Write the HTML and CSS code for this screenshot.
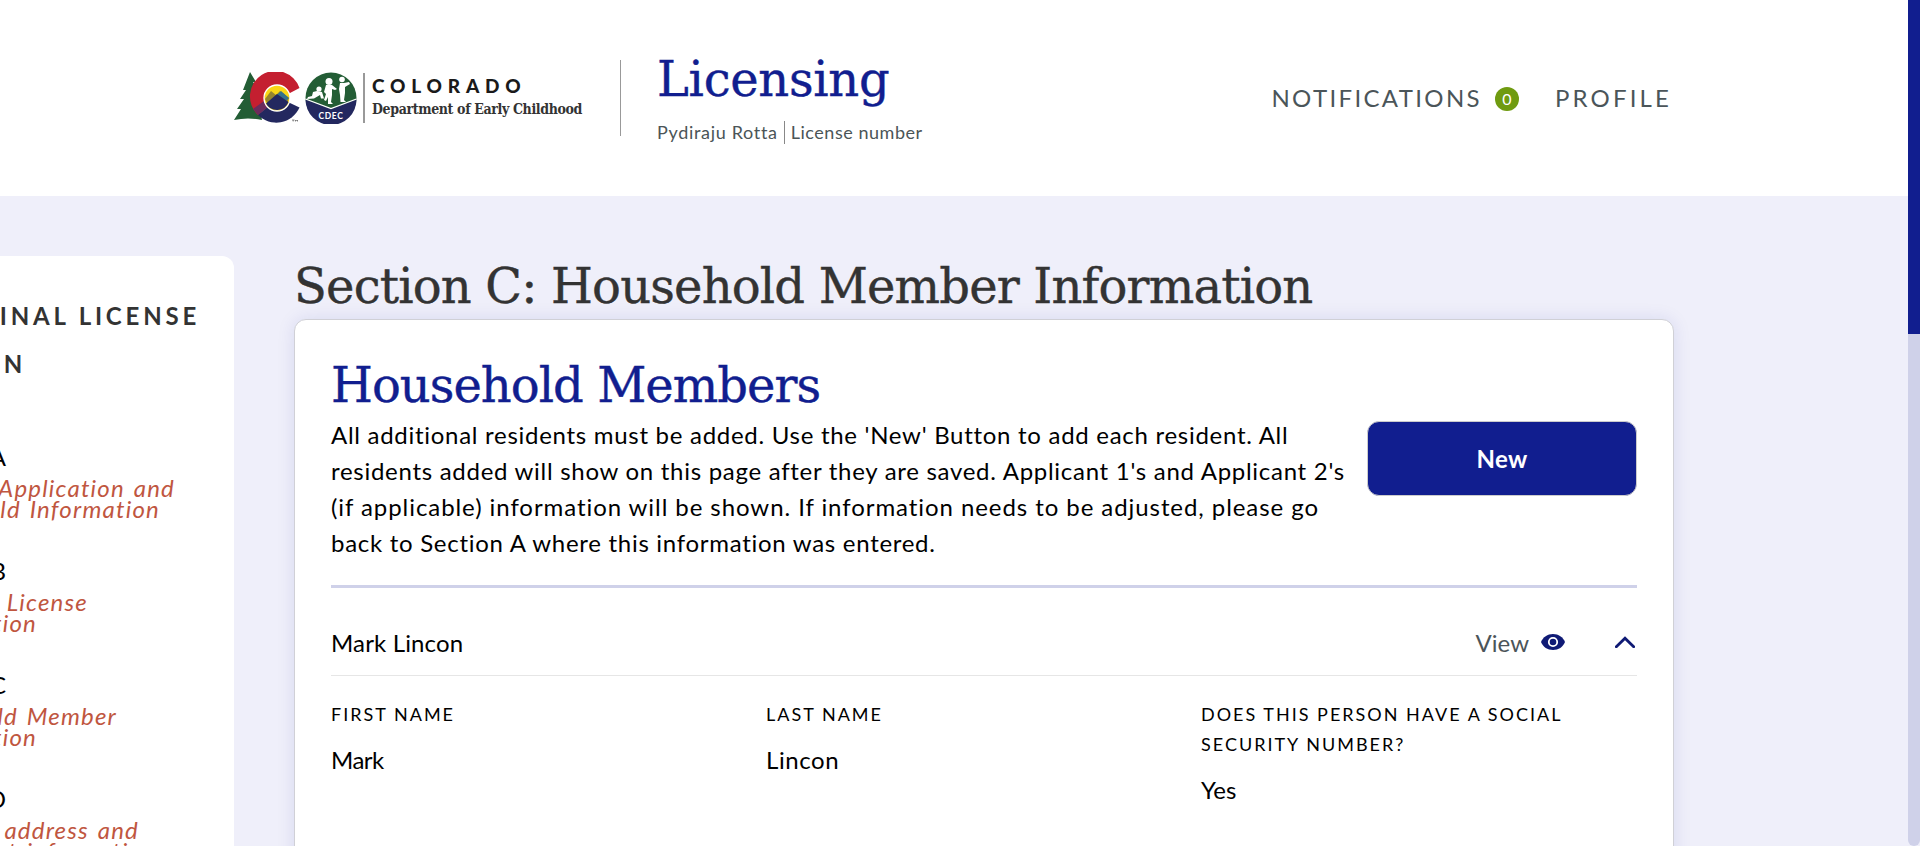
FILE: index.html
```
<!DOCTYPE html>
<html lang="en">
<head>
<meta charset="utf-8">
<title>Licensing</title>
<link rel="stylesheet" href="styles.css">
</head>
<body>
<div class="page">
<header class="header">
  <div class="brand">
    <svg class="logo" width="130" height="52" viewBox="0 0 130 52">
      <path d="M16 0 22 10 19 10 25 18 22 18 28 48Q14 45 0 48L7 37 3 37 10 27 6 27 12 18 9 18Z" fill="#235d35"/>
      <path d="M65.500 16A25.500 25.500 0 1 0 24 43L43 26 56 21Z" fill="#c41f30"/>
      <path d="M24 43A25.500 25.500 0 0 0 65.500 35.500L56 31 43 26Z" fill="#23285f"/>
      <path d="M19 37 30 29 34 35 24 43Z" fill="#6b2b5d"/>
      <circle cx="43" cy="26" r="13" fill="#f9d616" stroke="#fff" stroke-width="1.300"/>
      <path d="M31 27 37 19 42 23 46 19 55 26 53 32 43 34 33 31Z" fill="#95852e"/>
      <path d="M43 23 47 19 55 26 50 31 43 28Z" fill="#35728b"/>
      <path d="M32 31.500 43 22 54.500 30A12.400 12.400 0 0 1 32 31.500Z" fill="#23285f"/>
      <path d="M58 48h2.500M59.200 48v1.500M61.500 49.500v-1.500l1 1 1-1v1.500" stroke="#444" stroke-width=".6" fill="none"/>
      <circle cx="97" cy="26" r="25.500" fill="#235d35"/>
      <path d="M71.500 27.500 97 37 122.500 27.500A25.500 25.500 0 0 1 71.500 27.500Z" fill="#23285f"/>
      <path d="M71.500 27 97 36.500 122.500 27" stroke="#fff" stroke-width="1.300" fill="none"/>
      <g fill="#fff">
        <circle cx="85" cy="17" r="2.600"/><path d="M83 19 88 20 90 26.500 87 26.500 86 23 80 26.500 73 27 74 25 78 24 79 20Z"/>
        <circle cx="95" cy="9.500" r="3.500"/><path d="M92 13 98 13 103 17 101 18 98 17 98 23 97 30 99 32 94 32 94 25 92 29 90 28 92 22 90 20Z"/>
        <circle cx="108" cy="7.500" r="2.800"/><path d="M106 11 110 11 115 10 116 12 111 15 111 21 110 28 112 30 106.500 30 106 23 105 17Z"/>
      </g>
      <text class="logo-seal" x="97" y="46.500" text-anchor="middle">CDEC</text>
    </svg>
    <div class="agency">
      <div class="agency-state">COLORADO</div>
      <div class="agency-dept">Department of Early Childhood</div>
    </div>
    <div class="product">
      <div class="product-name">Licensing</div>
      <div class="user"><span class="user-name">Pydiraju Rotta</span><i class="bar"></i><span class="user-license">License number</span></div>
    </div>
  </div>
  <nav class="nav"><span class="nav-notes">NOTIFICATIONS</span><b class="badge">0</b><span class="nav-profile">PROFILE</span></nav>
</header>
<div class="content">
  <aside class="sidebar">
    <div class="side-title"><div class="line e1">ORIGINAL LICENSE</div><div class="line e2">APPLICATION</div></div>
    <section class="step"><h3 class="line e3">Section A</h3><p class="line e4">Original Application and</p><p class="line e5">Household Information</p></section>
    <section class="step"><h3 class="line e3">Section B</h3><p class="line e6">Current License</p><p class="line e7">Information</p></section>
    <section class="step"><h3 class="line e3">Section C</h3><p class="line e8">Household Member</p><p class="line e7">Information</p></section>
    <section class="step"><h3 class="line e3">Section D</h3><p class="line e9">Physical address and</p><p class="line e10">contact information</p></section>
  </aside>
  <main class="main">
    <h1 class="title">Section C: Household Member Information</h1>
    <div class="card">
      <h2 class="card-title">Household Members</h2>
      <div class="intro">
        <p class="intro-text">All additional residents must be added. Use the 'New' Button to add each resident. All<br>residents added will show on this page after they are saved. Applicant 1's and Applicant 2's<br><span class="wide">(if applicable) information will be shown. If information needs to be adjusted, please go</span><br>back to Section A where this information was entered.</p>
        <button class="new">New</button>
      </div>
      <div class="row">
        <span class="member">Mark Lincon</span>
        <div class="actions"><span>View</span>
          <svg class="eye" width="24" height="16" viewBox="0 0 24 16"><path d="M12 0C6.500 0 2 3 0 8c2 5 6.500 8 12 8s10-3 12-8C22 3 17.500 0 12 0Z" fill="#0f1a75"/><circle cx="12" cy="8" r="4.200" fill="#0f1a75" stroke="#fff" stroke-width="1.800"/></svg>
          <svg class="chev" width="20" height="12" viewBox="0 0 20 12"><path d="M1.300 10.700 10 2.200 18.700 10.700" fill="none" stroke="#0f1a75" stroke-width="2.800" stroke-linecap="round"/></svg>
        </div>
      </div>
      <dl class="fields">
        <div><dt>FIRST NAME</dt><dd class="tight">Mark</dd></div>
        <div><dt>LAST NAME</dt><dd class="loose">Lincon</dd></div>
        <div><dt>DOES THIS PERSON HAVE A SOCIAL<br>SECURITY NUMBER?</dt><dd>Yes</dd></div>
      </dl>
    </div>
  </main>
</div>
</div>
<div class="scroll"><div class="thumb"></div></div>
</body>
</html>
```
FILE: styles.css
```
*{box-sizing:border-box}
html,body{margin:0;height:846px;overflow:hidden}
body{display:flex;background:#efeffa;color:#000;font:24px/36px Lato,"Open Sans",sans-serif}
h1,h2,h3,p,dl,dd{margin:0;font-weight:400}
.page{width:1908px;flex:none;height:846px;overflow:hidden}
.header{height:196px;padding:0 234px;background:#fff;display:flex;justify-content:space-between;white-space:nowrap}
.brand{display:flex}
.logo{margin-top:72px}
.logo-seal{font:700 8.500px Lato,sans-serif;fill:#fff;letter-spacing:.6px}
.agency{margin:73px 0 0 -1px;height:50px;width:257px;border-left:2px solid #999;padding-left:7px;color:#1a1a1a}
.agency-state{font-weight:900;font-size:19px;line-height:26px;height:26px;letter-spacing:5.800px}
.agency-dept{font:700 14px/20px "DejaVu Serif",serif;font-stretch:condensed;color:#333;letter-spacing:-.360px}
.product{margin-top:60px;height:76px;border-left:1px solid #999;padding-left:36px;color:#4b5557}
.product-name{font:48px/60px "DejaVu Serif",serif;letter-spacing:-.300px;-webkit-text-stroke:.4px;color:#111e8f;margin-top:-11px}
.user{display:flex;align-items:center;font-size:18px;line-height:24px;margin-top:11px}
.user-name{letter-spacing:.680px}
.user-license{letter-spacing:.540px}
.bar{width:1px;height:23px;background:#888;margin:0 6px 0 6px}
.nav{display:flex;align-items:flex-start;padding:80px 2px 0 0;color:#4b5559}
.nav-notes{letter-spacing:2.350px}
.nav-profile{letter-spacing:3.150px}
.badge{width:24px;height:24px;border-radius:50%;background:#6f9b10;color:#fff;font-weight:400;font-size:16px;line-height:24px;text-align:center;margin:7px 36px 0 13px}
.content{display:flex;padding-top:60px}
.sidebar{width:234px;height:610px;flex:none;background:#fff;border-radius:0 12px 0 0;padding-top:36px}
.line{display:flex;justify-content:flex-end;white-space:nowrap}
.side-title{font-weight:700;color:#333;line-height:48px;margin-bottom:51px;letter-spacing:3.800px}
.step{margin-bottom:34px}
.step h3{font-size:24px;line-height:36px;margin-bottom:2px}
.step p{font-style:italic;line-height:21px;color:#c0563f;letter-spacing:1.200px;word-spacing:2px}
.e1{width:200px}.e2{width:26px}.e3{width:6px}.e4{width:175px}.e5{width:160px}.e6{width:88px}.e7{width:37px}.e8{width:117px}.e9{width:139px}.e10{width:156px}
.main{margin-left:60px;width:1380px}
.title,.card-title{font:48px/60px "DejaVu Serif",serif;-webkit-text-stroke:.4px;position:relative}
.title{color:#333;margin-bottom:3px;letter-spacing:-.820px}
.card{background:#fff;border:1px solid #d0d0d6;border-radius:12px;padding:35px 36px;height:600px;box-shadow:0 0 18px rgba(17,30,143,.1)}
.card-title{color:#111e8f;margin-bottom:1px;letter-spacing:-.970px}
.intro{display:flex;justify-content:space-between;border-bottom:3px solid #cfd1e9;height:172px}
.intro-text{padding-top:1px;white-space:nowrap;letter-spacing:.715px}
.wide{letter-spacing:.930px}
.new{width:270px;height:75px;margin-top:5px;background:#111e8f;border:1px solid #ccc;border-radius:12px;color:#fff;font:700 24px/36px Lato,sans-serif;letter-spacing:.400px}
.row{display:flex;justify-content:space-between;padding:37px 0 14px;border-bottom:1px solid #e6e6e6}
.member{letter-spacing:.150px}
.actions{display:flex;color:#4b5559}
.eye{margin:9px 50px 0 12px}
.chev{margin:11px 2px 0 0}
.fields{display:grid;grid-template-columns:435px 435px 436px;padding-top:23px}
.fields dt{font-size:18px;line-height:30px;margin-bottom:13px;letter-spacing:2px}
.tight{letter-spacing:-.500px}
.loose{letter-spacing:.600px}
.scroll{width:12px;flex:none;height:846px;background:#cfd1e9;border-radius:0 0 6px 6px}
.thumb{height:334px;background:#111e8f}
```
